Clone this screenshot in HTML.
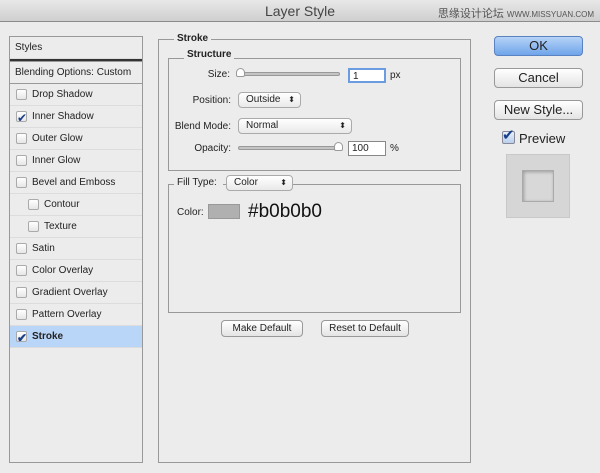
<!DOCTYPE html>
<html><head><style>
*{margin:0;padding:0;box-sizing:border-box}
body{width:600px;height:473px;background:#ececec;font-family:"Liberation Sans",sans-serif;font-size:10px;color:#222;position:relative;overflow:hidden}
.a{position:absolute}
.title{left:0;top:0;width:600px;height:22px;background:linear-gradient(#e8e8e8,#cfcfcf);border-bottom:1px solid #8c8c8c;text-align:center;font-size:14px;line-height:22px;color:#444}
.wm{right:6px;top:5px;font-size:11px;color:#555;font-family:"Liberation Sans","Noto Sans CJK SC",sans-serif}
.left{left:9px;top:36px;width:134px;height:427px;border:1px solid #999;background:#ececec}
.row{position:absolute;left:0;width:132px;height:22px;border-bottom:1px solid #dcdcdc;line-height:21px;padding-left:22px;font-size:10px}
.cb{position:absolute;left:6px;top:5px;width:11px;height:11px;border:1px solid #aaa;border-radius:2px;background:linear-gradient(#fff,#e6e6e6)}
.ck::after{content:"✔";position:absolute;left:0;top:-4px;font-size:12px;color:#1a3f8a}
.grp{border:1px solid #999}
.lg{position:absolute;background:#ececec;font-weight:bold;padding:0 3px;font-size:10px}
.lbl{position:absolute;text-align:right;font-size:10px}
.sel{position:absolute;height:16px;border:1px solid #aaa;border-radius:4px;background:linear-gradient(#fff,#e9e9e9);padding-left:7px;line-height:14px;font-size:10px}
.sel::after{content:"⬍";position:absolute;right:5px;top:0;font-size:8px}
.slider{position:absolute;height:4px;border:1px solid #999;border-radius:2px;background:#c4c4c4}
.inp{position:absolute;height:15px;border:1px solid #888;background:#fff;padding-left:3px;line-height:13px;font-size:10px}
.btn{position:absolute;border:1px solid #999;border-radius:4px;background:linear-gradient(#fff,#e4e4e4);text-align:center;font-size:10px}
.big{font-size:13px;height:20px;line-height:18px;width:89px;left:494px}
</style></head><body>
<div class="a title">Layer Style</div>
<div class="a wm">思缘设计论坛 <span style="font-size:8px">WWW.MISSYUAN.COM</span></div>

<div class="a left">
 <div class="row" style="top:0;padding-left:5px;height:22px">Styles</div>
 <div class="a" style="left:0;top:22px;width:132px;height:3px;border-top:2px solid #333;border-bottom:1px solid #999"></div>
 <div class="row" style="top:25px;padding-left:5px;border-bottom:1px solid #999">Blending Options: Custom</div>
 <div class="row" style="top:47px"><span class="cb"></span>Drop Shadow</div>
 <div class="row" style="top:69px"><span class="cb ck"></span>Inner Shadow</div>
 <div class="row" style="top:91px"><span class="cb"></span>Outer Glow</div>
 <div class="row" style="top:113px"><span class="cb"></span>Inner Glow</div>
 <div class="row" style="top:135px"><span class="cb"></span>Bevel and Emboss</div>
 <div class="row" style="top:157px;padding-left:34px"><span class="cb" style="left:18px"></span>Contour</div>
 <div class="row" style="top:179px;padding-left:34px"><span class="cb" style="left:18px"></span>Texture</div>
 <div class="row" style="top:201px"><span class="cb"></span>Satin</div>
 <div class="row" style="top:223px"><span class="cb"></span>Color Overlay</div>
 <div class="row" style="top:245px"><span class="cb"></span>Gradient Overlay</div>
 <div class="row" style="top:267px"><span class="cb"></span>Pattern Overlay</div>
 <div class="row" style="top:289px;background:#b9d5f8;font-weight:bold"><span class="cb ck"></span>Stroke</div>
</div>

<div class="a grp" style="left:158px;top:39px;width:313px;height:424px"></div>
<div class="lg" style="left:174px;top:33px">Stroke</div>
<div class="a grp" style="left:168px;top:58px;width:293px;height:113px"></div>
<div class="lg" style="left:184px;top:49px">Structure</div>
<div class="lbl" style="left:180px;top:69px;width:50px">Size:</div>
<div class="slider" style="left:236px;top:72px;width:104px"></div>
<div class="a" style="left:236px;top:68px;width:9px;height:9px;border:1px solid #999;border-radius:50% 50% 2px 2px;background:#fff"></div>
<div class="inp" style="left:348px;top:68px;width:38px;border:2px solid #6b9be0">1</div>
<div class="lbl" style="left:390px;top:70px">px</div>
<div class="lbl" style="left:180px;top:95px;width:51px">Position:</div>
<div class="sel" style="left:238px;top:92px;width:63px">Outside</div>
<div class="lbl" style="left:170px;top:121px;width:61px">Blend Mode:</div>
<div class="sel" style="left:238px;top:118px;width:114px">Normal</div>
<div class="lbl" style="left:180px;top:143px;width:51px">Opacity:</div>
<div class="slider" style="left:238px;top:146px;width:104px"></div>
<div class="a" style="left:334px;top:142px;width:9px;height:9px;border:1px solid #999;border-radius:50% 50% 2px 2px;background:#fff"></div>
<div class="inp" style="left:348px;top:141px;width:38px">100</div>
<div class="lbl" style="left:390px;top:143px">%</div>

<div class="a grp" style="left:168px;top:184px;width:293px;height:129px"></div>
<div class="lg" style="left:174px;top:177px;font-weight:normal;padding-right:6px">Fill Type:</div>
<div class="sel" style="left:226px;top:175px;width:67px">Color</div>
<div class="lbl" style="left:177px;top:207px">Color:</div>
<div class="a" style="left:208px;top:204px;width:32px;height:15px;background:#b0b0b0;border:1px solid #999"></div>
<div class="a" style="left:248px;top:201px;font-size:19px;color:#111">#b0b0b0</div>

<div class="btn" style="left:221px;top:320px;width:82px;height:17px;line-height:15px">Make Default</div>
<div class="btn" style="left:321px;top:320px;width:88px;height:17px;line-height:15px">Reset to Default</div>

<div class="btn big" style="top:36px;background:linear-gradient(#b6d2f7,#6fa5ea);border-color:#5a82c0">OK</div>
<div class="btn big" style="top:68px">Cancel</div>
<div class="btn big" style="top:100px">New Style...</div>
<div class="a" style="left:502px;top:131px;width:13px;height:13px;border:1px solid #889;border-radius:2px;background:linear-gradient(#e8f0fb,#b9cfee)"></div>
<div class="a" style="left:502px;top:126px;font-size:15px;color:#1a3f8a">✔</div>
<div class="a" style="left:519px;top:131px;font-size:13px">Preview</div>
<div class="a" style="left:506px;top:154px;width:64px;height:64px;background:#d6d6d6;border:1px solid #c8c8c8"></div>
<div class="a" style="left:522px;top:170px;width:32px;height:32px;background:#d8d8d8;border:1px solid #aaa;box-shadow:inset 1px 1px 3px #999"></div>
</body></html>
